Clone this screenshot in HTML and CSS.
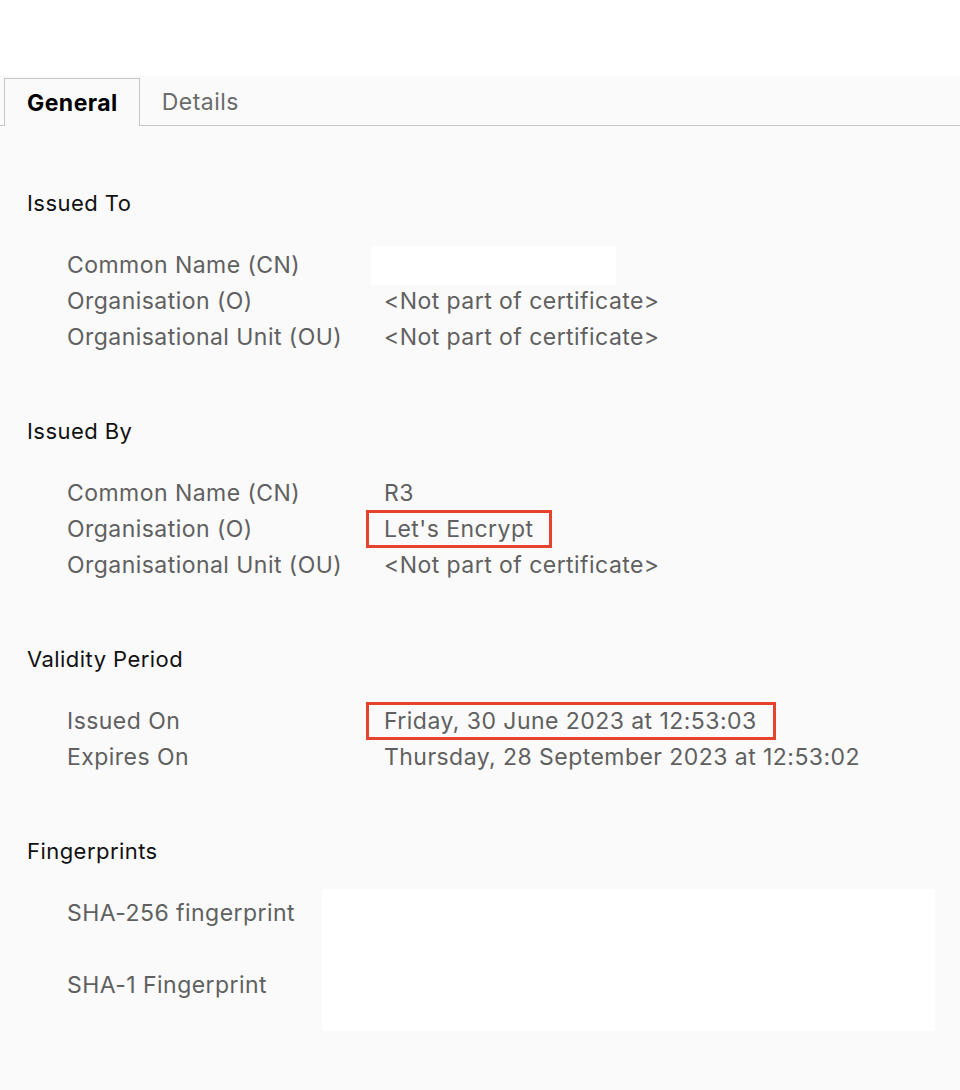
FILE: index.html
```html
<!DOCTYPE html>
<html lang="en">
<head>
<meta charset="utf-8">
<title>Certificate Viewer</title>
<link rel="stylesheet" href="styles.css">
</head>
<body>
<div class="spacer"></div>
<div class="panel">
  <div class="tabs">
    <div class="tab active">General</div>
    <div class="tab">Details</div>
  </div>

  <section class="section">
    <h2 class="heading">Issued To</h2>
    <div class="rows">
      <div class="label">Common Name (CN)</div>
      <div class="value"><span class="blank"></span></div>
      <div class="label">Organisation (O)</div>
      <div class="value">&lt;Not part of certificate&gt;</div>
      <div class="label">Organisational Unit (OU)</div>
      <div class="value">&lt;Not part of certificate&gt;</div>
    </div>
  </section>

  <section class="section">
    <h2 class="heading">Issued By</h2>
    <div class="rows">
      <div class="label">Common Name (CN)</div>
      <div class="value">R3</div>
      <div class="label">Organisation (O)</div>
      <div class="value"><span class="hl">Let's Encrypt</span></div>
      <div class="label">Organisational Unit (OU)</div>
      <div class="value">&lt;Not part of certificate&gt;</div>
    </div>
  </section>

  <section class="section">
    <h2 class="heading">Validity Period</h2>
    <div class="rows">
      <div class="label">Issued On</div>
      <div class="value"><span class="hl">Friday, 30 June 2023 at 12:53:03</span></div>
      <div class="label">Expires On</div>
      <div class="value">Thursday, 28 September 2023 at 12:53:02</div>
    </div>
  </section>

  <section class="section">
    <h2 class="heading">Fingerprints</h2>
    <div class="fp">
      <div class="fp-labels">
        <div class="label">SHA-256 fingerprint</div>
        <div class="label">SHA-1 Fingerprint</div>
      </div>
      <div class="fp-box"></div>
    </div>
  </section>
</div>
</body>
</html>
```

FILE: styles.css
```css
html, body {
  margin: 0;
  padding: 0;
  background: #ffffff;
}

body {
  font-family: Inter, "Noto Sans", "Liberation Sans", sans-serif;
  font-size: 23px;
  letter-spacing: 0.45px;
  color: #111111;
}

.spacer {
  height: 76px;
  background: #ffffff;
}

.panel {
  background: #fafafa;
  min-height: 1014px;
  box-sizing: border-box;
}

.tabs {
  display: flex;
  align-items: flex-end;
  padding-left: 4px;
  padding-top: 2px;
  border-bottom: 1px solid #c6c6c6;
  height: 47px;
}

.tab {
  height: 47px;
  box-sizing: border-box;
  display: flex;
  align-items: center;
  font-size: 23px;
  color: #6b6b6b;
  padding: 1px 22px 0 22px;
}

.tab.active {
  color: #000000;
  font-weight: 700;
  background: #fafafa;
  border: 1px solid #c6c6c6;
  border-bottom: none;
  height: 48px;
  margin-bottom: -1px;
  padding: 0 21px 0 22px;
}

.section {
  margin-top: 64px;
}

.section:first-of-type {
  margin-top: 65px;
}

.heading {
  margin: 0;
  padding-left: 27px;
  font-size: 22px;
  font-weight: 400;
  line-height: 24px;
  color: #111111;
}

.rows {
  display: grid;
  grid-template-columns: 317px 1fr;
  grid-auto-rows: 36px;
  padding-left: 67px;
  margin-top: 32px;
}

.label,
.value {
  line-height: 36px;
  color: #606060;
  white-space: nowrap;
}

.value {
  display: flex;
  align-items: center;
}

.blank {
  display: block;
  width: 245px;
  height: 39px;
  margin-left: -13px;
  margin-top: 1px;
  background: #ffffff;
}

.hl {
  display: inline-block;
  border: 3px solid #e5432d;
  padding: 1px 16px 0 15px;
  margin-left: -18px;
  line-height: 31px;
}

.fp {
  display: flex;
  margin-top: 26px;
}

.fp-labels {
  width: 255px;
  flex-shrink: 0;
  padding-left: 67px;
  padding-top: 6px;
  display: flex;
  flex-direction: column;
  gap: 36px;
}

.fp-box {
  width: 613px;
  height: 142px;
  background: #ffffff;
}
```
